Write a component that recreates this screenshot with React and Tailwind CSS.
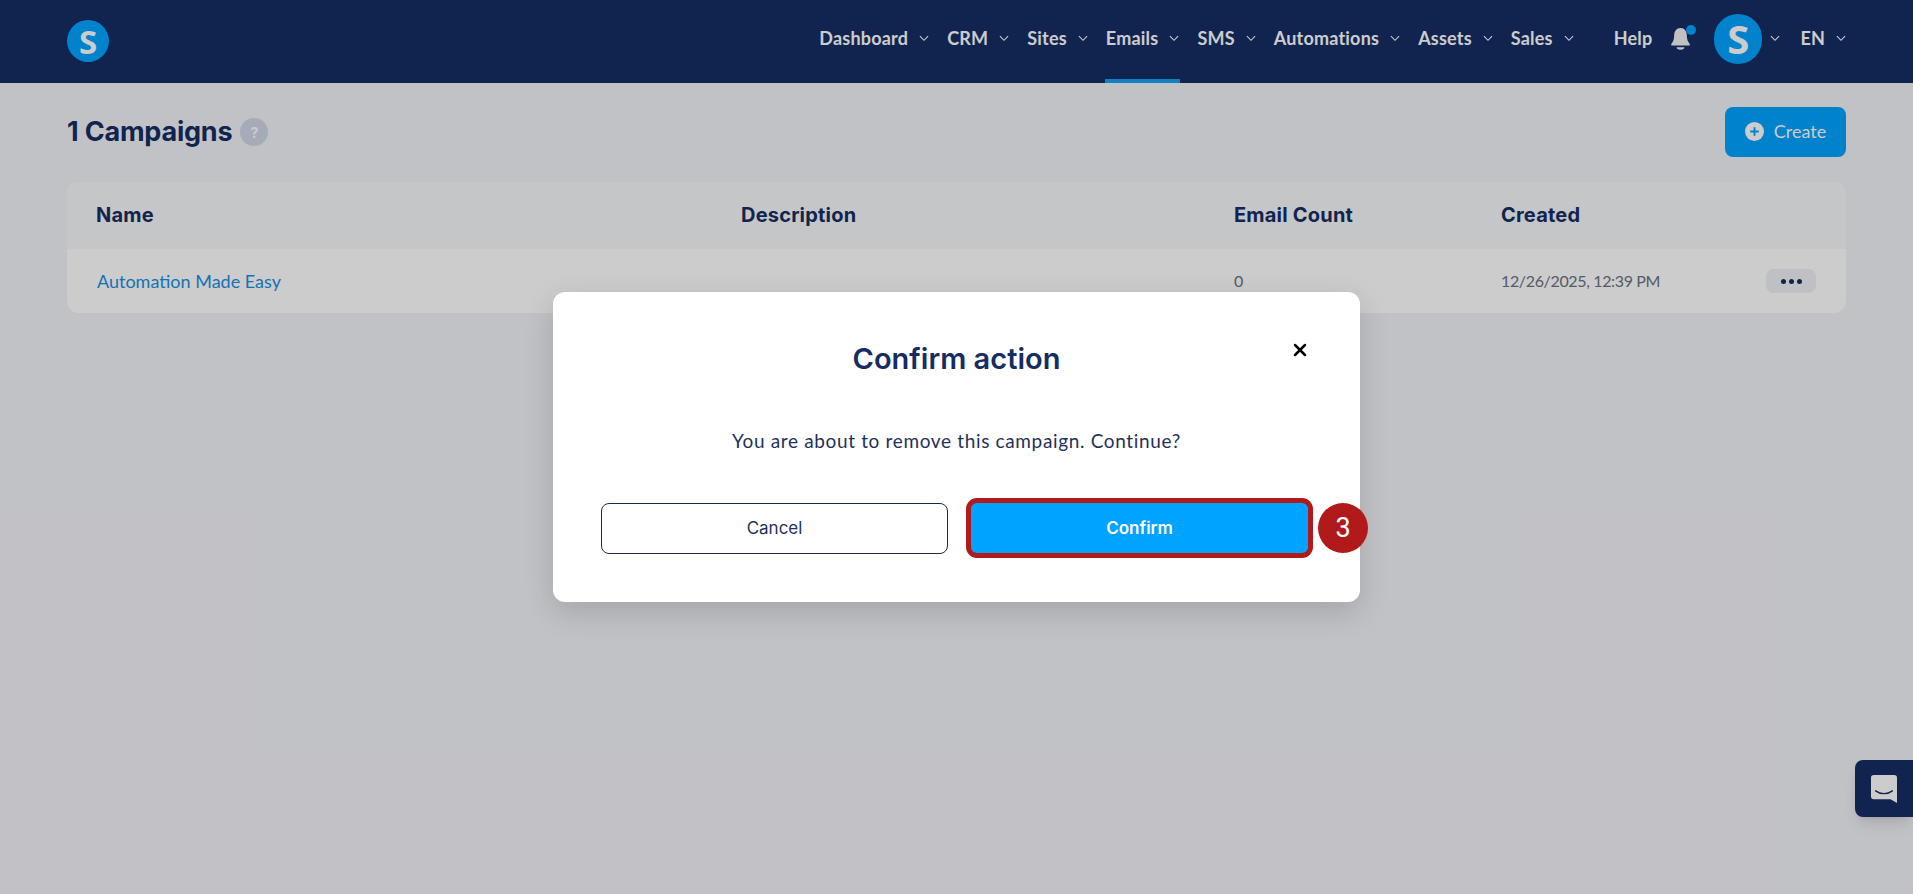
import { X } from "lucide-react";

const navItems = [
  { label: "Dashboard" },
  { label: "CRM" },
  { label: "Sites" },
  { label: "Emails", active: true },
  { label: "SMS" },
  { label: "Automations" },
  { label: "Assets" },
  { label: "Sales" },
];

function Caret({ className }) {
  return (
    <svg viewBox="0 0 11 7" className={`h-[7px] w-[10px] shrink-0 ${className}`} fill="none" stroke="currentColor" strokeWidth="1.2">
      <path d="M1 1l4.500 4.500L10 1" />
    </svg>
  );
}

function App() {
  return (
    <div className="relative h-[894px] overflow-hidden bg-[#f2f3f8] font-['Inter',sans-serif] text-[#162d63]">
      <header className="flex h-[83px] items-center justify-between bg-[#162d63] pl-[67px] pr-[67px] text-white">
        <div className="mb-[1px] flex h-[42px] w-[42px] items-center justify-center rounded-full bg-[#00a3ff] font-['Open_Sans',sans-serif] text-[33px] font-bold leading-none">
          S
        </div>
        <nav className="flex h-full items-center pb-[6px] font-['Lato',sans-serif] text-[18px] font-bold tracking-[0.2px]">
          {navItems.map((item) => (
            <div key={item.label} className="relative mr-[18px] flex h-full items-center">
              <span>{item.label}</span>
              <Caret className="ml-[11px]" />
              {item.active && (
                <span className="absolute -bottom-[6px] -left-px -right-px h-1 bg-[#18a0f5]" />
              )}
            </div>
          ))}
          <span className="ml-[22px]">Help</span>
          <div className="relative ml-[18px] h-[23px] w-[21px]">
            <svg viewBox="0 0 24 26" className="h-[23px] w-[21px]" fill="#f2f2f2">
              <path d="M12 1c-4.600 0-7.200 3.800-7.200 8.300 0 4.800-1.300 7.700-3.300 9.700v2h21v-2c-2-2-3.300-4.900-3.300-9.700C19.200 4.800 16.600 1 12 1z" />
              <path d="M7.500 23h9c0 1.800-1.500 2.800-4.500 2.800s-4.500-1-4.500-2.800z" />
            </svg>
            <span className="absolute -right-[5px] -top-[2px] h-[10px] w-[10px] rounded-full bg-[#00a3ff]" />
          </div>
          <div className="ml-[23px] flex h-[50px] w-[48px] items-center justify-center rounded-full bg-[#00a3ff] font-['Open_Sans',sans-serif] text-[40px] font-bold leading-none tracking-normal">
            S
          </div>
          <Caret className="ml-[8px]" />
          <span className="ml-[20px]">EN</span>
          <Caret className="ml-[11px]" />
        </nav>
      </header>

      <main className="px-[67px]">
        <div className="flex h-[99px] items-center justify-between pb-[1px]">
          <div className="flex items-center">
            <h1 className="text-[27px] font-bold tracking-[-0.2px]">1 Campaigns</h1>
            <span className="ml-2 flex h-7 w-7 items-center justify-center rounded-full bg-[#cfd8e6] text-[14px] font-bold text-white">
              ?
            </span>
          </div>
          <button className="flex h-[50px] w-[121px] items-center justify-center gap-[10px] rounded-lg bg-[#00a3ff] pb-px font-['Lato',sans-serif] text-[18px] text-white">
            <svg viewBox="0 0 20 20" className="h-[19px] w-[19px]">
              <circle cx="10" cy="10" r="10" fill="#fff" />
              <path d="M10 5.500v9M5.500 10h9" stroke="#00a3ff" strokeWidth="2" />
            </svg>
            Create
          </button>
        </div>

        <div className="overflow-hidden rounded-xl bg-white">
          <div className="grid h-[67px] grid-cols-[645px_493px_267px_1fr] items-center bg-[#f7f8fb] pb-[2px] pl-[29px] text-[20px] font-bold tracking-[0.2px]">
            <span>Name</span>
            <span>Description</span>
            <span>Email Count</span>
            <span>Created</span>
          </div>
          <div className="grid h-[64px] grid-cols-[645px_493px_267px_1fr] items-center pl-[29px] font-['Lato',sans-serif] text-[16px] text-[#6b7280]">
            <span className="pl-px text-[18px] text-[#1a8fe0]">Automation Made Easy</span>
            <span />
            <span>0</span>
            <div className="flex items-center justify-between pr-[30px]">
              <span className="tracking-[-0.35px]">12/26/2025, 12:39 PM</span>
              <span className="flex h-6 w-[50px] items-center justify-center gap-[3px] rounded-lg bg-[#eef0f5]">
                <i className="h-[5px] w-[5px] rounded-full bg-[#162d63]" />
                <i className="h-[5px] w-[5px] rounded-full bg-[#162d63]" />
                <i className="h-[5px] w-[5px] rounded-full bg-[#162d63]" />
              </span>
            </div>
          </div>
        </div>
      </main>

      <div className="absolute bottom-[77px] right-0 flex h-[57px] w-[58px] items-center justify-center rounded-l-lg bg-[#162d63] shadow-lg">
        <svg viewBox="0 0 28 30" className="h-[30px] w-[26px]">
          <path d="M3 0h22a3 3 0 0 1 3 3v27l-7-4H3a3 3 0 0 1-3-3V3a3 3 0 0 1 3-3z" fill="#fff" />
          <path d="M5 17c5 4 13 4 18 0" fill="none" stroke="#162d63" strokeWidth="1.500" strokeLinecap="round" />
        </svg>
      </div>

      <div className="absolute inset-0 bg-black/20" />

      <div className="absolute inset-0 flex justify-center pt-[292px]">
        <div className="relative h-[310px] w-[807px] rounded-xl bg-white px-12 shadow-[0_10px_30px_rgba(0,0,0,0.15)]">
          <h2 className="pt-[47px] text-center text-[29px] font-semibold leading-[40px] text-[#162d63]">
            Confirm action
          </h2>
          <X size={20} strokeWidth={3} className="absolute right-[50px] top-[48px] text-black" />
          <p className="mt-[50px] text-center font-['Lato',sans-serif] text-[19px] leading-6 tracking-[0.65px] text-[#1f3157]">
            You are about to remove this campaign. Continue?
          </p>
          <div className="mt-[50px] flex gap-[23px]">
            <button className="h-[51px] w-[347px] rounded-lg border border-[#1b2b4b] text-[17px] font-normal text-[#1f3157]">
              Cancel
            </button>
            <div className="relative">
              <button className="h-[50px] w-[337px] rounded-md bg-[#00a3ff] pt-px text-[17px] font-semibold text-white ring-[5px] ring-[#b11a1a]">
                Confirm
              </button>
              <span className="absolute left-full top-0 ml-[10px] flex h-[50px] w-[50px] items-center justify-center rounded-full bg-[#b11a1a] font-['Roboto',sans-serif] text-[27px] text-white">
                3
              </span>
            </div>
          </div>
        </div>
      </div>
    </div>
  );
}

export default App;
